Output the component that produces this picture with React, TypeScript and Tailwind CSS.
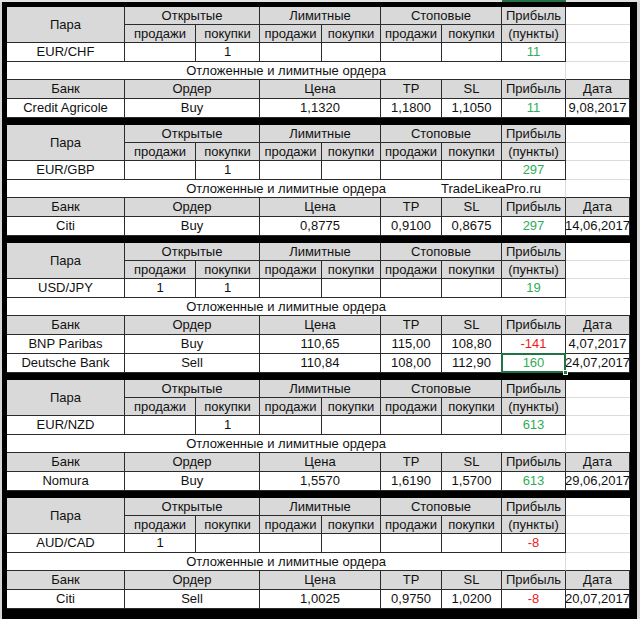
import React from "react";

type Order = {
  bank: string;
  order: string;
  price: string;
  tp: string;
  sl: string;
  profit: string;
  date: string;
  selected?: boolean;
};

type Block = {
  pair: string;
  openSell: string;
  openBuy: string;
  profit: string;
  orders: Order[];
  watermark?: boolean;
};

const blocks: Block[] = [
  {
    pair: "EUR/CHF",
    openSell: "",
    openBuy: "1",
    profit: "11",
    orders: [{ bank: "Credit Agricole", order: "Buy", price: "1,1320", tp: "1,1800", sl: "1,1050", profit: "11", date: "9,08,2017" }],
  },
  {
    pair: "EUR/GBP",
    openSell: "",
    openBuy: "1",
    profit: "297",
    watermark: true,
    orders: [{ bank: "Citi", order: "Buy", price: "0,8775", tp: "0,9100", sl: "0,8675", profit: "297", date: "14,06,2017" }],
  },
  {
    pair: "USD/JPY",
    openSell: "1",
    openBuy: "1",
    profit: "19",
    orders: [
      { bank: "BNP Paribas", order: "Buy", price: "110,65", tp: "115,00", sl: "108,80", profit: "-141", date: "4,07,2017" },
      { bank: "Deutsche Bank", order: "Sell", price: "110,84", tp: "108,00", sl: "112,90", profit: "160", date: "24,07,2017", selected: true },
    ],
  },
  {
    pair: "EUR/NZD",
    openSell: "",
    openBuy: "1",
    profit: "613",
    orders: [{ bank: "Nomura", order: "Buy", price: "1,5570", tp: "1,6190", sl: "1,5700", profit: "613", date: "29,06,2017" }],
  },
  {
    pair: "AUD/CAD",
    openSell: "1",
    openBuy: "",
    profit: "-8",
    orders: [{ bank: "Citi", order: "Sell", price: "1,0025", tp: "0,9750", sl: "1,0200", profit: "-8", date: "20,07,2017" }],
  },
];

const base = "flex items-center justify-center whitespace-nowrap";
const hd = `${base} bg-[#d9d9d9] border-r border-b border-[#2b2b2b]`;
const cell = `${base} bg-white border-r border-b border-[#2b2b2b]`;
const grid = `${base} bg-white border-b border-[#dcdcdc]`;

function profitColor(p: string) {
  return p.startsWith("-") ? "text-[#ee1c1c]" : "text-[#30ad57]";
}

function BlockTable({ b }: { b: Block }) {
  const rows =
    b.orders.length === 2
      ? "grid-rows-[18px_18px_19px_18px_19px_19px_19px]"
      : "grid-rows-[18px_18px_19px_18px_19px_19px]";
  return (
    <div className={`grid grid-cols-[118px_71px_64px_62px_59px_61px_60px_64px_64px] ${rows}`}>
      <div className={`${hd} row-span-2`}>Пара</div>
      <div className={`${hd} col-span-2`}>Открытые</div>
      <div className={`${hd} col-span-2`}>Лимитные</div>
      <div className={`${hd} col-span-2`}>Стоповые</div>
      <div className={hd}>Прибыль</div>
      <div className={grid}></div>

      <div className={hd}>продажи</div>
      <div className={hd}>покупки</div>
      <div className={hd}>продажи</div>
      <div className={hd}>покупки</div>
      <div className={hd}>продажи</div>
      <div className={hd}>покупки</div>
      <div className={hd}>(пункты)</div>
      <div className={grid}></div>

      <div className={cell}>{b.pair}</div>
      <div className={cell}>{b.openSell}</div>
      <div className={cell}>{b.openBuy}</div>
      <div className={cell}></div>
      <div className={cell}></div>
      <div className={cell}></div>
      <div className={cell}></div>
      <div className={`${cell} ${profitColor(b.profit)}`}>{b.profit}</div>
      <div className={grid}></div>

      <div className={`${base} relative col-span-8 bg-white border-b border-r border-b-[#2b2b2b] border-r-[#dcdcdc]`}>
        Отложенные и лимитные ордера
        {b.watermark && (
          <span className="absolute left-[434px] top-[0px] bottom-0 flex items-center text-[13px]">TradeLikeaPro.ru</span>
        )}
      </div>
      <div className={`${base} bg-white border-b border-[#2b2b2b]`}></div>

      <div className={hd}>Банк</div>
      <div className={`${hd} col-span-2`}>Ордер</div>
      <div className={`${hd} col-span-2`}>Цена</div>
      <div className={hd}>TP</div>
      <div className={hd}>SL</div>
      <div className={hd}>Прибыль</div>
      <div className={hd}>Дата</div>

      {b.orders.map((o, i) => (
        <React.Fragment key={i}>
          <div className={cell}>{o.bank}</div>
          <div className={`${cell} col-span-2`}>{o.order}</div>
          <div className={`${cell} col-span-2`}>{o.price}</div>
          <div className={cell}>{o.tp}</div>
          <div className={cell}>{o.sl}</div>
          <div className={`${cell} relative ${profitColor(o.profit)}`}>
            {o.profit}
            {o.selected && (
              <>
                <span className="absolute -left-[1px] -top-[1px] right-[-1px] bottom-[-1px] border-2 border-[#217346]"></span>
                <span className="absolute right-[-3px] bottom-[-3px] w-[5px] h-[5px] bg-[#217346] border border-white"></span>
              </>
            )}
          </div>
          <div className={`${cell} overflow-visible`}>{o.date}</div>
        </React.Fragment>
      ))}
    </div>
  );
}

export default function App() {
  return (
    <div
      className="w-[640px] h-[619px] bg-[#d6d6d6] flex flex-col overflow-hidden text-[13px] text-[#111]"
      style={{ fontFamily: '"Liberation Sans", Arial, sans-serif' }}
    >
      <div className="h-[2px] flex shrink-0">
        <div className="w-[502px] bg-[#e2e2e2]"></div>
        <div className="w-[64px] bg-[#217346]"></div>
        <div className="flex-1 bg-[#e2e2e2]"></div>
      </div>
      <div className="flex-1 flex pl-[2px] pr-[3px]">
        <div className="flex-1 bg-black pt-[5px] pl-[5px] pr-[7px] flex flex-col gap-[7px]">
          {blocks.map((b, i) => (
            <BlockTable key={i} b={b} />
          ))}
        </div>
      </div>
    </div>
  );
}
